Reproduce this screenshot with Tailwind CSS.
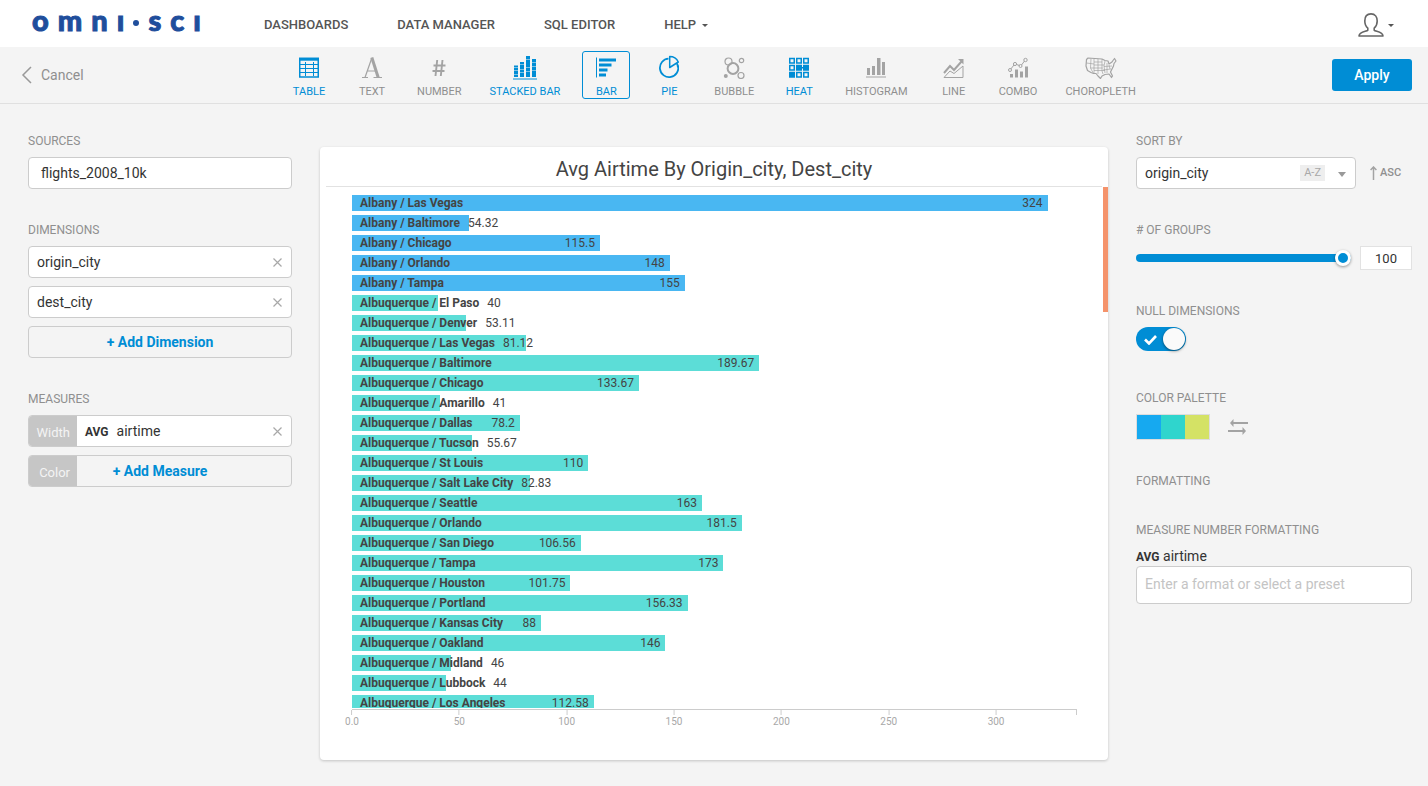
<!DOCTYPE html>
<html lang="en">
<head>
<meta charset="utf-8">
<meta name="viewport" content="width=device-width, initial-scale=1">
<title>OmniSci Immerse – Chart Editor</title>
<script src="https://cdn.jsdelivr.net/npm/@tailwindcss/browser@4"></script>
</head>
<body class="flex h-screen flex-col bg-[#f4f4f4] font-[Roboto,'Liberation_Sans',sans-serif] text-sm text-[#333]">

<header class="flex h-[47px] shrink-0 items-center bg-white pl-8 pr-[34px]">
  <a href="#" class="flex h-[47px] w-[169px] items-center justify-between pb-2 font-[Lato,sans-serif] text-[29px] leading-none font-black text-[#1f4e9c] [-webkit-text-stroke:1px_#1f4e9c]"><span>o</span><span>m</span><span>n</span><span>ı</span><span class="size-[6px] translate-y-[3px] rounded-full bg-[#1f4e9c]"></span><span>s</span><span>c</span><span>ı</span></a>
  <nav class="ml-[63px] flex items-center gap-[49px] pt-1 text-[13px] font-medium text-[#555]">
    <a href="#">DASHBOARDS</a>
    <a href="#">DATA MANAGER</a>
    <a href="#">SQL EDITOR</a>
    <button type="button" class="flex items-center gap-[6px]">HELP
      <svg width="6" height="3" viewBox="0 0 6 3" fill="#555"><path d="M0 0h6L3 3z"/></svg>
    </button>
  </nav>
  <button type="button" aria-label="Account" class="ml-auto flex items-center gap-1 pt-[3px]">
    <svg width="26" height="24" viewBox="0 0 26 24" fill="none" stroke="#666" stroke-width="1.6" stroke-linejoin="round"><path d="M13 .9c-4.200 0-6.200 3-6.200 7 0 3.200 1.200 5.700 3 7.200v2.100c-1 1.300-8.500 1.500-8.800 5.800h24c-.3-4.300-7.800-4.500-8.800-5.800v-2.100c1.800-1.500 3-4 3-7.200 0-4-2-7-6.200-7z"/></svg>
    <svg width="6" height="3" viewBox="0 0 6 3" fill="#555"><path d="M0 0h6L3 3z"/></svg>
  </button>
</header>

<div class="grid h-[57px] shrink-0 grid-cols-[1fr_auto_1fr] items-center border-b border-[#e0e0e0] px-4">
  <a href="#" class="flex items-center gap-[9px] pl-[5px] text-[#8f8f8f]">
    <svg width="11" height="18" viewBox="0 0 11 18" fill="none" stroke="#999" stroke-width="1.500"><path d="M10 1 2 9l8 8"/></svg>Cancel
  </a>
  <div class="flex gap-[15px] text-[11px] leading-[13px] text-[#8f8f8f]">
    <button type="button" class="flex h-12 min-w-12 flex-col items-center justify-between px-[6px] pt-[6px] pb-px text-[#008dd5]">
      <svg width="20" height="22" viewBox="0 0 20 22" fill="none" stroke="currentColor"><path d="M.75 1.500h18.500v18.500H.75z" stroke-width="1.500"/><path d="M0 2.200h20" stroke-width="3"/><path d="M1 7.500h18M1 11.500h18M1 15.500h18M6.500 5v14M14.500 5v14"/></svg>TABLE</button>
    <button type="button" class="flex h-12 min-w-12 flex-col items-center justify-between px-[6px] pt-[6px] pb-px">
      <svg width="22" height="22" viewBox="0 0 22 22" fill="none" stroke="#a3a3a3"><path d="M1 20.500h6M12.500 20.500h8.500" stroke-width="1.200"/><path d="M4 20.500 10.800 1M6 14h9" stroke-width="1.200"/><path d="M10.800.5 17.200 20.500" stroke-width="3"/></svg>TEXT</button>
    <button type="button" class="flex h-12 min-w-12 flex-col items-center justify-between px-[6px] pt-[6px] pb-px">
      <svg width="14" height="22" viewBox="0 0 14 22" fill="none" stroke="#a3a3a3" stroke-width="1.900"><path d="M5.200 3 3.500 19M10.500 3 8.800 19M1.500 8.500h12M.5 14h12"/></svg>NUMBER</button>
    <button type="button" class="flex h-12 min-w-12 flex-col items-center justify-between px-[7px] pt-[5px] pb-px text-[#008dd5]">
      <svg width="24" height="24" viewBox="0 0 24 24" fill="currentColor"><path d="M1 9.500h4v2H1zM1 12h4v2.500H1zM1 15h4v3H1zM1 18.500h4v2.500H1zM7 6h4v2.500H7zM7 9h4v4H7zM7 13.500h4v3H7zM7 17h4v4H7zM13 0h4v3h-4zM13 3.500h4v8h-4zM13 12h4v3.500h-4zM13 16h4v5h-4zM19 3h4v3h-4zM19 6.500h4V10h-4zM19 10.500h4v4h-4zM19 15h4v6h-4zM0 22.500h24v1H0z"/></svg>STACKED BAR</button>
    <button type="button" aria-pressed="true" class="flex h-12 min-w-12 flex-col items-center justify-between rounded-[3px] border border-[#008dd5] px-[5px] pt-[5px] text-[#008dd5]">
      <svg width="20" height="22" viewBox="0 0 20 22" fill="currentColor"><path d="M0 .5h1v20H0zM3 1.500h17v3H3zM3 6.500h12.500v3H3zM3 11.500h8.500v3H3zM3 16.500h7v3H3z"/></svg>BAR</button>
    <button type="button" class="flex h-12 min-w-12 flex-col items-center justify-between px-[6px] pt-[4px] pb-px text-[#008dd5]">
      <svg width="20" height="24" viewBox="0 0 20 24" fill="none" stroke="currentColor" stroke-width="1.500" stroke-linejoin="round"><path d="M9.500 3.700a9.200 9.200 0 1 0 9.500 6.800" stroke-width="1.800"/><path d="M10.700 12.500V1.500a9.500 9.500 0 0 1 8.600 5.500z"/><path d="M18 8.500a9 9 0 0 1 .9 4" stroke-width="1.800"/></svg>PIE</button>
    <button type="button" class="flex h-12 min-w-12 flex-col items-center justify-between px-[6px] pt-[6px] pb-px">
      <svg width="22" height="22" viewBox="0 0 22 22" fill="none" stroke="#a3a3a3" stroke-width="1.200"><circle cx="10" cy="11.500" r="5.400" stroke-width="2"/><circle cx="5.500" cy="4.500" r="3.500"/><circle cx="18.500" cy="3.500" r="2.200"/><circle cx="18" cy="18.500" r="3"/><circle cx="2.800" cy="19" r="2" fill="#a3a3a3" stroke="none"/></svg>BUBBLE</button>
    <button type="button" class="flex h-12 min-w-12 flex-col items-center justify-between px-[6px] pt-[6px] pb-px text-[#008dd5]">
      <svg width="20" height="22" viewBox="0 0 20 22" fill="none" stroke="currentColor" stroke-width="1.500"><path d="M.75 1.500h4.500V6H.75zM7.750 1.500h4.500V6h-4.500zM14.750 1.500h4.500V6h-4.500zM.75 8.500h4.500V13H.75zM7.750 15.500h4.500V20h-4.500zM14.750 15.500h4.500V20h-4.500z"/><path fill="currentColor" d="M7.750 8.500h4.500V13h-4.500zM14.750 8.500h4.500V13h-4.500zM.75 15.500h4.500V20H.75zM12 10.700h3"/></svg>HEAT</button>
    <button type="button" class="flex h-12 min-w-12 flex-col items-center justify-between px-[7px] pt-[6px] pb-px">
      <svg width="20" height="22" viewBox="0 0 20 22" fill="#a3a3a3"><path d="M1 11h3v7H1zM6 9h3v9H6zM11 1h3.500v17H11zM16 5h3v13h-3zM0 19.500h20v1H0z"/></svg>HISTOGRAM</button>
    <button type="button" class="flex h-12 min-w-12 flex-col items-center justify-between px-[6px] pt-[6px] pb-px">
      <svg width="21" height="22" viewBox="0 0 21 22" fill="none" stroke="#a3a3a3" stroke-width="1"><path d="M1 16 7 9l4 4 7.500-8.500" stroke-width="2"/><path d="M15 2h5.500v5.500z" fill="#a3a3a3" stroke="none"/><path d="M1 20.500 7 14l4 2.500 9-7.500v11.500z"/></svg>LINE</button>
    <button type="button" class="flex h-12 min-w-12 flex-col items-center justify-between px-[6px] pt-[6px] pb-px">
      <svg width="20" height="22" viewBox="0 0 20 22" fill="none" stroke="#a3a3a3" stroke-width="1"><path d="M2.800 12 6 8M8.500 7.500l3 1M13.500 8 16.500 4"/><circle cx="2" cy="13" r="1.500"/><circle cx="7" cy="7" r="1.600"/><circle cx="12.500" cy="9" r="1.500"/><circle cx="17.500" cy="3" r="1.700"/><path d="M2 17h3v3.500H2zM7 12.500h3v8H7zM12 14.500h3v6h-3zM17 9.500h3v11h-3z" fill="#a3a3a3" stroke="none"/></svg>COMBO</button>
    <button type="button" class="flex h-12 min-w-12 flex-col items-center justify-between px-[7px] pt-[6px] pb-px">
      <svg width="32" height="22" viewBox="0 0 32 22" fill="none" stroke="#a3a3a3" stroke-linejoin="round"><path stroke-width="1.200" d="M1.500 2.500 3 1l14 1 3 1.500 3 .5 1 3 3-2 1-1.500 1.500-2L31 4l-2 2.500-.5 2.500-1.500 3-1.500 3 2 4-1 1.500-2.500-3.500-4 .5-3 1.500-1.500 2.500L13 19l-2-2.500H8.500L6 15.500l-3.500-2L1 9z"/><path stroke-width=".7" d="M1.500 6 9 7M6 1.500 5.500 11l3 5.500M9 1.500V17M13 1.800V17M9 5h8M5.500 11h12M9 8h10M9 13.500h11M17 2v12l1 3M20 4l-1 5 1 7M22 6v10M19 9.500l8-.5M18 13l8-1M24 8l1 4"/></svg>CHOROPLETH</button>
  </div>
  <button type="button" class="h-8 w-20 justify-self-end rounded-[3px] bg-[#008dd5] font-medium text-white">Apply</button>
</div>

<main class="flex min-h-0 flex-1 gap-7 pr-4 pl-7">

  <aside class="flex w-[264px] shrink-0 flex-col gap-[33px] pt-[29px]">
    <section class="flex flex-col gap-2">
      <h2 class="text-xs text-[#8f8f8f]">SOURCES</h2>
      <button type="button" class="h-8 rounded border border-[#ccc] bg-white pl-3 text-left">flights_2008_10k</button>
    </section>
    <section class="flex flex-col gap-2">
      <h2 class="text-xs text-[#8f8f8f]">DIMENSIONS</h2>
      <div class="flex h-8 items-center justify-between rounded border border-[#ccc] bg-white px-2">
        <span>origin_city</span>
        <button type="button" aria-label="Remove origin_city" class="px-px"><svg width="9" height="9" viewBox="0 0 9 9" stroke="#a8a8a8" stroke-width="1.200"><path d="m.5.5 8 8M8.500.5l-8 8"/></svg></button>
      </div>
      <div class="flex h-8 items-center justify-between rounded border border-[#ccc] bg-white px-2">
        <span>dest_city</span>
        <button type="button" aria-label="Remove dest_city" class="px-px"><svg width="9" height="9" viewBox="0 0 9 9" stroke="#a8a8a8" stroke-width="1.200"><path d="m.5.5 8 8M8.500.5l-8 8"/></svg></button>
      </div>
      <button type="button" class="h-8 rounded border border-[#ccc] font-bold text-[#008dd5]">+ Add Dimension</button>
    </section>
    <section class="flex flex-col gap-2">
      <h2 class="text-xs text-[#8f8f8f]">MEASURES</h2>
      <div class="flex h-8 items-center overflow-hidden rounded border border-[#ccc] bg-white pr-2">
        <span class="flex h-full w-12 items-center justify-end bg-[#c6c6c6] pt-1 pr-[7px] text-[13px] text-[#f4f4f4]">Width</span>
        <b class="pt-0.5 pl-2 text-xs">AVG</b>
        <span class="pl-2">airtime</span>
        <button type="button" aria-label="Remove airtime" class="ml-auto px-px"><svg width="9" height="9" viewBox="0 0 9 9" stroke="#a8a8a8" stroke-width="1.200"><path d="m.5.5 8 8M8.500.5l-8 8"/></svg></button>
      </div>
      <button type="button" class="grid h-8 grid-cols-[48px_1fr_48px] items-center overflow-hidden rounded border border-[#ccc]">
        <span class="flex h-full items-center justify-end bg-[#c6c6c6] pt-1 pr-[7px] text-[13px] text-[#f4f4f4]">Color</span>
        <span class="font-bold text-[#008dd5]">+ Add Measure</span>
      </button>
    </section>
  </aside>

  <section class="relative mt-[43px] mb-[26px] flex min-w-0 flex-1 flex-col rounded-sm bg-white shadow-[0_1px_3px_rgba(0,0,0,0.2)]">
    <h1 class="mx-[6px] h-10 shrink-0 border-b border-[#e2e2e2] pt-2 text-center text-xl leading-7 text-[#444]">Avg Airtime By Origin_city, Dest_city</h1>
    <div class="absolute top-10 right-0 h-[125px] w-[5px] bg-[#f5936b]"></div>
    <ul id="bars" class="mr-[31px] ml-8 flex min-h-0 flex-1 flex-col gap-1 overflow-hidden pt-2 text-xs text-[#444]"></ul>
    <div id="axis" class="relative mt-px mr-[31px] mb-[25px] ml-8 h-[26px] shrink-0 border-t border-[#ccc] text-[10px] text-[#a8a8a8]">
      <span class="absolute top-0 right-0 h-[5px] w-px bg-[#ccc]"></span>
    </div>
  </section>

  <aside class="flex w-[276px] shrink-0 flex-col gap-[33px] pt-[29px]">
    <section class="flex flex-col gap-2">
      <label for="sort" class="text-xs text-[#8f8f8f]">SORT BY</label>
      <div class="flex items-center gap-[14px]">
        <div class="relative w-[220px]">
          <select id="sort" class="h-8 w-full appearance-none rounded border border-[#ccc] bg-white px-2"><option>origin_city</option><option>dest_city</option></select>
          <span class="pointer-events-none absolute top-2 right-[31px] bg-[#eee] px-1 text-[11px] leading-4 text-[#a8a8a8]">A-Z</span>
          <svg class="pointer-events-none absolute top-[15px] right-[10px]" width="8" height="5" viewBox="0 0 8 5" fill="#999"><path d="M0 0h8L4 5z"/></svg>
        </div>
        <button type="button" class="flex items-center gap-[3px] text-[11px] font-medium text-[#8f8f8f]">
          <svg width="7" height="14" viewBox="0 0 7 14" fill="none" stroke="#a3a3a3" stroke-width="1.500"><path d="M3.500 14V2M.6 4 3.500 1l2.900 3"/></svg>ASC</button>
      </div>
    </section>

    <section class="flex flex-col gap-2">
      <label for="groups" class="text-xs text-[#8f8f8f]"># OF GROUPS</label>
      <div class="flex h-6 items-center gap-[9px]">
        <input id="groups" type="range" min="1" max="100" value="100" class="h-2 min-w-0 flex-1 appearance-none rounded-full bg-[#008dd5] [&::-webkit-slider-thumb]:size-4 [&::-webkit-slider-thumb]:appearance-none [&::-webkit-slider-thumb]:rounded-full [&::-webkit-slider-thumb]:border-3 [&::-webkit-slider-thumb]:border-white [&::-webkit-slider-thumb]:bg-[#008dd5] [&::-webkit-slider-thumb]:shadow-[0_1px_3px_rgba(0,0,0,0.4)]">
        <input type="text" aria-label="Number of groups" value="100" class="h-6 w-[52px] border border-[#e2e2e2] bg-white text-center text-[13px]">
      </div>
    </section>

    <section class="flex flex-col gap-2">
      <label for="nulls" class="text-xs text-[#8f8f8f]">NULL DIMENSIONS</label>
      <div class="relative h-[30px] w-[50px]">
        <input id="nulls" type="checkbox" checked class="block h-6 w-[50px] appearance-none rounded-full bg-[#ccc] checked:bg-[#008dd5]">
        <svg class="pointer-events-none absolute top-[8px] left-2" width="13" height="10" viewBox="0 0 13 10" fill="none" stroke="#fff" stroke-width="2.600"><path d="m1 4.500 4 4L12 1"/></svg>
        <span class="pointer-events-none absolute top-px right-px size-[22px] rounded-full bg-[#fafafa] shadow-[0_1px_3px_rgba(0,0,0,0.5)]"></span>
      </div>
    </section>

    <section class="flex flex-col gap-2">
      <h2 class="text-xs text-[#8f8f8f]">COLOR PALETTE</h2>
      <div class="flex items-center gap-[18px]">
        <button type="button" aria-label="Choose palette" class="flex h-[26px] w-[74px] border border-[#ddd]"><span class="h-full flex-1 bg-[#16a9f0]"></span><span class="h-full flex-1 bg-[#2fd5cd]"></span><span class="h-full flex-1 bg-[#d4e265]"></span></button>
        <button type="button" aria-label="Reverse palette">
          <svg width="20" height="16" viewBox="0 0 20 16" fill="#a3a3a3"><path d="M5.500 3H20v2H5.500v3L2 4l3.500-4zM0 11h14.500V8l3.500 4-3.500 4v-3H0z"/></svg></button>
      </div>
    </section>

    <h2 class="text-xs text-[#8f8f8f]">FORMATTING</h2>

    <section class="flex flex-col">
      <h2 class="text-xs text-[#8f8f8f]">MEASURE NUMBER FORMATTING</h2>
      <label for="format" class="pt-2"><b class="text-xs">AVG</b> airtime</label>
      <input id="format" type="text" placeholder="Enter a format or select a preset" class="h-[38px] rounded border border-[#ccc] bg-white px-2 pb-0.5 placeholder:text-[#c4c4c4]">
    </section>
  </aside>
</main>

<script>
  const MAX = 337.7;
  const rows = [
    ["Albany / Las Vegas", 324], ["Albany / Baltimore", 54.32], ["Albany / Chicago", 115.5],
    ["Albany / Orlando", 148], ["Albany / Tampa", 155],
    ["Albuquerque / El Paso", 40], ["Albuquerque / Denver", 53.11], ["Albuquerque / Las Vegas", 81.12],
    ["Albuquerque / Baltimore", 189.67], ["Albuquerque / Chicago", 133.67], ["Albuquerque / Amarillo", 41],
    ["Albuquerque / Dallas", 78.2], ["Albuquerque / Tucson", 55.67], ["Albuquerque / St Louis", 110],
    ["Albuquerque / Salt Lake City", 82.83], ["Albuquerque / Seattle", 163], ["Albuquerque / Orlando", 181.5],
    ["Albuquerque / San Diego", 106.56], ["Albuquerque / Tampa", 173], ["Albuquerque / Houston", 101.75],
    ["Albuquerque / Portland", 156.33], ["Albuquerque / Kansas City", 88], ["Albuquerque / Oakland", 146],
    ["Albuquerque / Midland", 46], ["Albuquerque / Lubbock", 44], ["Albuquerque / Los Angeles", 112.58]
  ];
  document.getElementById("bars").innerHTML = rows.map(([name, value]) => {
    const width = value / MAX * 100 + "%";
    const bar = name.startsWith("Albany")
      ? "absolute inset-y-0 left-0 bg-[#49b7f2]"
      : "absolute inset-y-0 left-0 bg-[#5cddd7]";
    return `<li class="relative h-4 shrink-0"><span class="${bar}" style="width:${width}"></span>
      <span class="relative flex w-max justify-between gap-2 pr-[5px] pl-2 leading-4" style="min-width:${width}"><b>${name}</b><span>${value}</span></span></li>`;
  }).join("");
  document.getElementById("axis").insertAdjacentHTML("beforeend", [0, 50, 100, 150, 200, 250, 300].map(t =>
    `<span class="absolute top-0 flex -translate-x-1/2 flex-col items-center leading-[13px]" style="left:${t / MAX * 100}%"><i class="h-[5px] w-px bg-[#ccc]"></i>${t || "0.0"}</span>`
  ).join(""));
</script>
</body>
</html>
